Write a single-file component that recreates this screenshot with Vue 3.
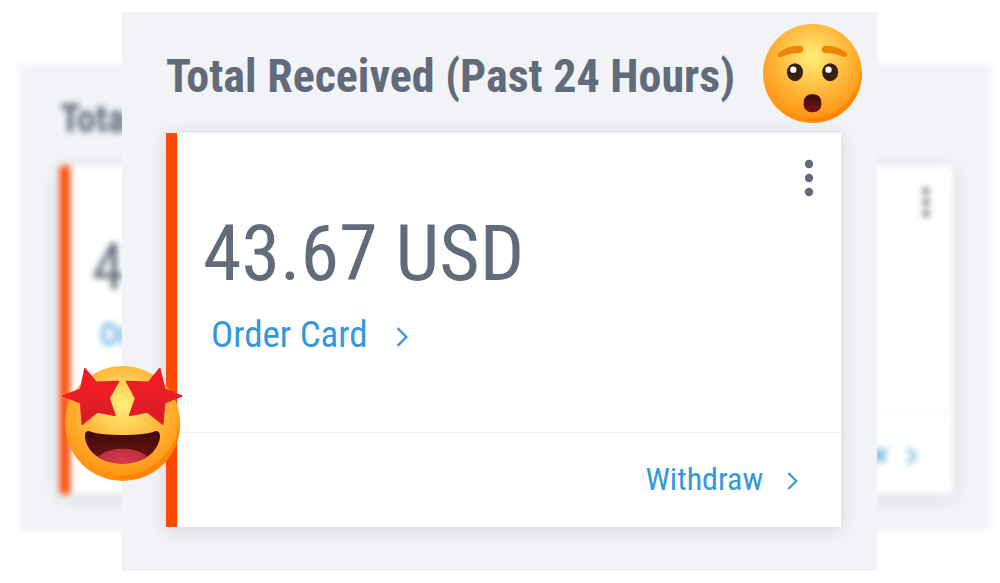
<template>
  <main class="stage">
    <!-- Two blurred copies sit behind the sharp panel -->
    <section
      v-for="panel in panels"
      :key="panel"
      class="panel"
      :class="'panel-' + panel"
      :inert="panel !== 'front'"
      :aria-hidden="panel !== 'front'"
    >
      <h2 class="title">{{ title }}</h2>
      <div class="card">
        <div class="card-body">
          <button type="button" class="menu-btn" aria-label="More options">
            <svg viewBox="0 0 10 38" class="dots">
              <circle cx="5" cy="5" r="4.2" />
              <circle cx="5" cy="19" r="4.2" />
              <circle cx="5" cy="33" r="4.2" />
            </svg>
          </button>
          <p class="amount">{{ amount }}</p>
          <a href="#order" class="link order-link">
            Order Card
            <svg viewBox="0 0 12 20" class="chevron">
              <path d="M1.5 1.2 L10.4 10 L1.5 18.8" />
            </svg>
          </a>
        </div>
        <div class="card-footer">
          <a href="#withdraw" class="link withdraw-link">
            Withdraw
            <svg viewBox="0 0 12 20" class="chevron">
              <path d="M1.5 1.2 L10.4 10 L1.5 18.8" />
            </svg>
          </a>
        </div>
      </div>

      <template v-if="panel === 'front'">
        <svg class="emoji emoji-surprised" viewBox="69 42 297 297" aria-hidden="true">
          <defs>
            <radialGradient id="surprisedFace" gradientUnits="userSpaceOnUse" cx="218" cy="142" r="196">
              <stop offset="0" stop-color="#ffef78" />
              <stop offset="0.45" stop-color="#ffc044" />
              <stop offset="1" stop-color="#ff8e0c" />
            </radialGradient>
            <linearGradient id="surprisedMouth" x1="0" y1="0" x2="0" y2="1">
              <stop offset="0.2" stop-color="#430e0c" />
              <stop offset="1" stop-color="#7c1414" />
            </linearGradient>
          </defs>
          <circle cx="217.5" cy="190.5" r="148.5" fill="url(#surprisedFace)" />
          <path d="M365 178 C358 262 290 334 182 325 C264 360 372 292 365 178 Z" fill="#ff7f00" opacity="0.75" />
          <path d="M120 141 C111 141 111 133 118 127 C136 112 158 107 178 107 C193 107 193 128 180 129 C160 129 146 131 130 139 Z" fill="#ef8409" />
          <path d="M315 141 C324 141 324 133 317 127 C299 112 277 107 257 107 C242 107 242 128 255 129 C275 129 289 131 305 139 Z" fill="#ef8409" />
          <ellipse cx="165" cy="186.5" rx="24" ry="27" fill="#38200f" />
          <ellipse cx="270.5" cy="186.5" rx="24" ry="27" fill="#38200f" />
          <circle cx="160" cy="179" r="9.5" fill="#fff" />
          <circle cx="265.5" cy="179" r="9.5" fill="#fff" />
          <rect x="191" y="253" width="53" height="54" rx="23" fill="url(#surprisedMouth)" />
        </svg>

        <svg class="emoji emoji-starry" viewBox="35 48 363 345" aria-hidden="true">
          <defs>
            <radialGradient id="starryFace" gradientUnits="userSpaceOnUse" cx="217" cy="165" r="228">
              <stop offset="0" stop-color="#ffef78" />
              <stop offset="0.45" stop-color="#ffc044" />
              <stop offset="1" stop-color="#ff8e0c" />
            </radialGradient>
            <linearGradient id="starryEyes" x1="0" y1="0" x2="0" y2="1">
              <stop offset="0.4" stop-color="#ee1d25" />
              <stop offset="1" stop-color="#d01c28" />
            </linearGradient>
            <linearGradient id="starryMouth" x1="0" y1="0" x2="0" y2="1">
              <stop offset="0.15" stop-color="#450c0b" />
              <stop offset="1" stop-color="#731414" />
            </linearGradient>
            <radialGradient id="starryTongue" cx="0.5" cy="0.4" r="0.55">
              <stop offset="0" stop-color="#dc3a4c" />
              <stop offset="1" stop-color="#b52c3d" />
            </radialGradient>
            <clipPath id="starryMouthClip">
              <path d="M116 243 C104 241 102 255 105 268 C114 312 160 341 217 341 C274 341 318 312 328 268 C331 255 328 241 316 243 C284 259 149 259 116 243 Z" />
            </clipPath>
          </defs>
          <circle cx="217" cy="220.5" r="172.5" fill="url(#starryFace)" />
          <path d="M388 206 C382 306 300 388 176 377 C272 418 398 340 388 206 Z" fill="#ff7f00" opacity="0.75" />
          <g clip-path="url(#starryMouthClip)">
            <rect x="100" y="238" width="232" height="106" fill="url(#starryMouth)" />
            <ellipse cx="217" cy="346" rx="86" ry="50" fill="url(#starryTongue)" />
          </g>
          <path
            d="M104 56 L137 97 L204 95 L176 145 L194 196 L141 186 L96 222 L91 158 L38 138 L91 118 Z"
            fill="url(#starryEyes)" stroke="#e91d26" stroke-width="5" stroke-linejoin="round"
          />
          <path
            d="M328 56 L295 97 L229 95 L256 145 L238 196 L292 186 L337 222 L343 158 L394 138 L343 118 Z"
            fill="url(#starryEyes)" stroke="#e91d26" stroke-width="5" stroke-linejoin="round"
          />
        </svg>
      </template>
    </section>
  </main>
</template>

<script setup>
import { ref } from 'vue'

// Drawn in this order, so the front panel ends up on top
const panels = ['left', 'right', 'front']

const title = ref('Total Received (Past 24 Hours)')
const amount = ref('43.67 USD')
</script>

<style>
body {
  margin: 0;
  background: #fff;
}
</style>

<style scoped>
.stage {
  display: grid;
  padding: 12px 0;
  overflow: hidden;
  font-family: 'Roboto Condensed', 'Liberation Sans Narrow', Roboto, sans-serif;
}

.panel {
  grid-area: 1 / 1;
  box-sizing: border-box;
  position: relative;
  align-self: start;
  background: #f1f3f7;
  white-space: nowrap;
}

.panel-front {
  justify-self: center;
  width: 75.5%;
  margin-right: 1px;
  padding: 36px 36px 44px 44px;
  --title: 46px;
  --title-line: 56px;
  --title-gap: 29px;
  --bar: 11px;
  --body-pad: 81px 26px 75px;
  --amount: 78px;
  --amount-line: 80px;
  --order: 37px;
  --order-line: 44px;
  --order-gap: 19px;
  --order-space: 28px;
  --withdraw: 32px;
  --withdraw-space: 24px;
  --footer: 94px;
  --footer-pad: 43px;
  --dots: 10px;
  --menu-top: 26px;
  --menu-right: 27px;
}

.panel-left,
.panel-right {
  width: 63%;
  margin-top: 51px;
  filter: blur(3px);
  --title: 38px;
  --title-line: 47px;
  --title-gap: 23px;
  --bar: 10px;
  --body-pad: 68px 22px 62px;
  --amount: 65px;
  --amount-line: 66px;
  --order: 31px;
  --order-line: 36px;
  --order-gap: 17px;
  --order-space: 23px;
  --withdraw: 27px;
  --withdraw-space: 19px;
  --footer: 78px;
  --footer-pad: 36px;
  --dots: 8px;
  --menu-top: 21px;
  --menu-right: 23px;
}

.panel-left {
  justify-self: start;
  margin-left: 19px;
  padding: 33px 37px 37px 41px;
}

.panel-right {
  justify-self: end;
  margin-right: 9px;
  padding: 33px 38px 36px 37px;
}

.title {
  margin: 0 0 var(--title-gap);
  font-size: var(--title);
  line-height: var(--title-line);
  font-weight: 700;
  color: #626b79;
}

.card {
  background: #fff;
  border-left: var(--bar) solid #ff4800;
  box-shadow: 0 3px 20px rgba(40, 44, 60, 0.14);
}

.card-body {
  position: relative;
  padding: var(--body-pad);
  border-bottom: 1px solid #eff1f4;
}

.menu-btn {
  position: absolute;
  top: var(--menu-top);
  right: var(--menu-right);
  padding: 0;
  border: none;
  background: none;
  cursor: pointer;
}

.dots {
  display: block;
  width: var(--dots);
  fill: #626b79;
}

.amount {
  margin: 0 0 var(--order-gap);
  font-size: var(--amount);
  line-height: var(--amount-line);
  color: #626b79;
}

.link {
  display: flex;
  align-items: center;
  color: #3498db;
  text-decoration: none;
}

.order-link {
  gap: var(--order-space);
  padding-left: 8px;
  font-size: var(--order);
  line-height: var(--order-line);
}

.withdraw-link {
  gap: var(--withdraw-space);
  font-size: var(--withdraw);
}

.card-footer {
  display: flex;
  align-items: center;
  justify-content: flex-end;
  box-sizing: border-box;
  height: var(--footer);
  padding: 0 var(--footer-pad) 2px 0;
}

.chevron {
  height: 20px;
  margin-top: 3px;
  fill: none;
  stroke: currentColor;
  stroke-width: 2.4;
}

.withdraw-link .chevron {
  height: 18px;
}

.emoji {
  position: absolute;
}

.emoji-surprised {
  top: 12px;
  right: 15px;
  width: 99px;
}

.emoji-starry {
  bottom: 90px;
  left: -60px;
  width: 121px;
}
</style>
